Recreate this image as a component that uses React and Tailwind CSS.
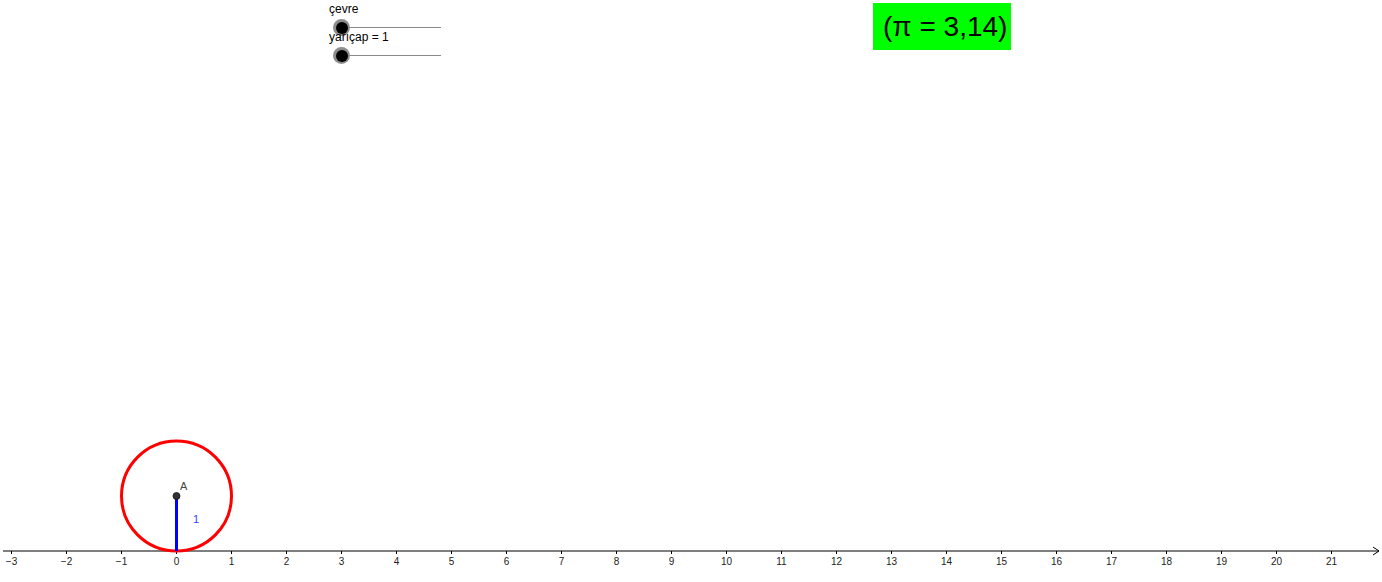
import React from 'react';

const X0 = 176.5;
const UNIT = 55;
const AXIS_Y = 551;
const ticks = Array.from({ length: 25 }, (_, i) => i - 3);

function Slider({ label, top }) {
  return (
    <div className="absolute left-[329px] w-[120px]" style={{ top }}>
      <div className="text-[12px] leading-[14px] text-black">{label}</div>
      <div className="relative mt-[3px] h-[16px]">
        <div className="absolute left-[12px] right-[8px] top-[8px] h-px bg-[#8a8a8a]" />
        <div className="absolute left-[4px] top-0 flex h-[17px] w-[17px] items-center justify-center rounded-full bg-[#8d8d8d]">
          <div className="h-[12px] w-[12px] rounded-full bg-black" />
        </div>
      </div>
    </div>
  );
}

export default function App() {
  return (
    <div className="relative h-[582px] w-[1382px] overflow-hidden bg-white font-['Liberation_Sans',Arial,sans-serif]">
      <svg className="absolute inset-0" width="1382" height="582">
        {/* x axis */}
        <line x1="3" y1={AXIS_Y} x2="1379" y2={AXIS_Y} stroke="#000" strokeWidth="1" />
        <polyline points={`1373,${AXIS_Y - 4} 1379,${AXIS_Y} 1373,${AXIS_Y + 4}`} fill="none" stroke="#000" strokeWidth="1" />
        {ticks.map((n) => (
          <g key={n}>
            <line x1={X0 + n * UNIT} y1={AXIS_Y} x2={X0 + n * UNIT} y2={AXIS_Y + 3} stroke="#000" strokeWidth="1" />
            <text x={X0 + n * UNIT} y={AXIS_Y + 14} textAnchor="middle" fontSize="10" fill="#222" fontFamily="Liberation Sans, Arial, sans-serif">
              {n < 0 ? `\u2212${-n}` : n}
            </text>
          </g>
        ))}
        {/* circle */}
        <circle cx={X0} cy="496" r="55" fill="none" stroke="#ff0000" strokeWidth="3" />
        {/* radius */}
        <line x1={X0} y1="496" x2={X0} y2={AXIS_Y} stroke="#0000ff" strokeWidth="3" />
        <circle cx={X0} cy="496" r="3.5" fill="#333" stroke="#111" strokeWidth="0.8" />
        <text x="180" y="490" fontSize="11" fill="#444" fontFamily="Liberation Sans, Arial, sans-serif">A</text>
        <text x="193" y="523" fontSize="11" fill="#3c3cff" fontFamily="Liberation Sans, Arial, sans-serif">1</text>
      </svg>

      <Slider label="çevre" top={2} />
      <Slider label="yarıçap = 1" top={30} />

      <div className="absolute left-[873px] top-[3px] flex h-[47px] w-[138px] items-center bg-[#00ff00] pl-[10px] text-[28px] leading-none text-black">
        (π = 3,14)
      </div>
    </div>
  );
}
